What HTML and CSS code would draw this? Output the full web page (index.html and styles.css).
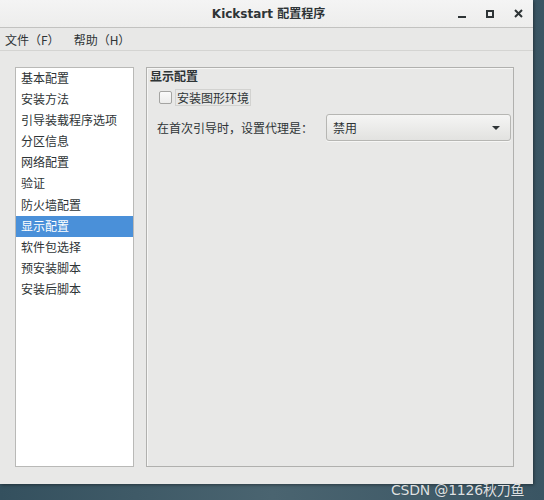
FILE: index.html
```html
<!DOCTYPE html>
<html lang="zh">
<head>
<meta charset="utf-8">
<link rel="stylesheet" href="styles.css">
</head>
<body>
<div class="desktop">
  <div class="window">
    <div class="titlebar">
      <div></div>
      <div class="title">Kickstart 配置程序</div>
      <div class="controls">
        <span class="ctl min"></span>
        <span class="ctl max"></span>
        <span class="ctl close">
          <svg width="9" height="9" viewBox="0 0 9 9"><path d="M1 1L8 8M8 1L1 8" stroke="#2e3436" stroke-width="2"/></svg>
        </span>
      </div>
    </div>
    <div class="menubar">
      <span class="menu">文件（F）</span>
      <span class="menu">帮助（H）</span>
    </div>
    <div class="content">
      <div class="list">
        <div class="item">基本配置</div>
        <div class="item">安装方法</div>
        <div class="item">引导装载程序选项</div>
        <div class="item">分区信息</div>
        <div class="item">网络配置</div>
        <div class="item">验证</div>
        <div class="item">防火墙配置</div>
        <div class="item selected">显示配置</div>
        <div class="item">软件包选择</div>
        <div class="item">预安装脚本</div>
        <div class="item">安装后脚本</div>
      </div>
      <div class="frame">
        <div class="legend">显示配置</div>
        <div class="check-row">
          <span class="checkbox"></span>
          <span class="check-label">安装图形环境</span>
        </div>
        <div class="combo-row">
          <span class="combo-label">在首次引导时，设置代理是：</span>
          <div class="combo">
            <span>禁用</span>
            <span class="arrow"></span>
          </div>
        </div>
      </div>
    </div>
  </div>
  <div class="watermark">CSDN @1126秋刀鱼</div>
</div>
</body>
</html>
```
FILE: styles.css
```css
* { box-sizing: border-box; }
html, body {
  margin: 0;
  padding: 0;
}
body {
  width: 544px;
  height: 500px;
  overflow: hidden;
  font-family: "Noto Sans CJK SC", "DejaVu Sans", sans-serif;
  font-size: 12px;
  color: #2e3436;
}
.desktop {
  position: relative;
  width: 544px;
  height: 500px;
  background: linear-gradient(90deg, #34505e 0%, #4a6470 50%, #3a5563 100%);
}
.window {
  width: 533px;
  height: 484px;
  background: #e8e8e7;
  display: flex;
  flex-direction: column;
  box-shadow: 1px 1px 3px rgba(0,0,0,0.4);
}
.titlebar {
  height: 28px;
  flex: none;
  display: grid;
  grid-template-columns: 1fr auto 1fr;
  align-items: center;
  background: linear-gradient(#f4f4f4, #ededec);
  border-bottom: 1px solid #c2c2c0;
}
.title {
  font-family: "DejaVu Sans", "Noto Sans CJK SC", sans-serif;
  font-weight: bold;
  font-size: 12px;
  color: #2e3436;
  padding-bottom: 2px;
  padding-left: 4px;
}
.controls {
  display: flex;
  justify-content: flex-end;
  align-items: center;
  padding-right: 1px;
}
.ctl {
  width: 28px;
  height: 16px;
  display: flex;
  align-items: center;
  justify-content: center;
}
.min::before {
  content: "";
  width: 8px;
  height: 2px;
  background: #2e3436;
  margin-top: 6px;
}
.max::before {
  content: "";
  width: 8px;
  height: 8px;
  border: 2px solid #2e3436;
  box-sizing: border-box;
}
.menubar {
  height: 23px;
  flex: none;
  display: flex;
  align-items: center;
  gap: 14px;
  padding-left: 5px;
  border-bottom: 1px solid #d4d4d2;
  background: #e8e8e7;
}
.menu {
  font-size: 12px;
  color: #2e3436;
}
.content {
  flex: 1;
  display: flex;
  padding: 16px 20px 17px 15px;
  gap: 12px;
}
.list {
  width: 119px;
  flex: none;
  background: #ffffff;
  border: 1px solid #b9b9b7;
  padding-top: 0;
  display: flex;
  flex-direction: column;
}
.item {
  height: 21.1px;
  line-height: 19px;
  padding-left: 5px;
  font-size: 12px;
  color: #2e3436;
}
.item.selected {
  background: #4a90d9;
  color: #ffffff;
  line-height: 20px;
}
.frame {
  flex: 1;
  border: 1px solid #b0b0ae;
  box-shadow: inset 1px 1px 0 #f6f6f5;
  padding: 0 2px 0 10px;
}
.legend {
  font-weight: bold;
  font-size: 12px;
  line-height: 15px;
  margin-left: -7px;
  color: #2e3436;
}
.check-row {
  display: flex;
  align-items: center;
  gap: 3px;
  margin-top: 6px;
  margin-left: 2px;
}
.checkbox {
  width: 13px;
  height: 13px;
  border: 1px solid #a4a4a2;
  border-radius: 2px;
  background: linear-gradient(#fafafa, #ececeb);
}
.check-label {
  border: 1px solid #d2d2d0;
  padding: 0 1px;
  line-height: 15px;
}
.combo-row {
  display: flex;
  align-items: center;
  margin-top: 8px;
}
.combo-label {
  width: 169px;
}
.combo {
  width: 185px;
  height: 27px;
  border: 1px solid #b6b6b3;
  border-radius: 3px;
  background: linear-gradient(#f5f5f4, #e2e2e0);
  display: flex;
  align-items: center;
  justify-content: space-between;
  padding: 0 10px 0 6px;
  box-shadow: 0 1px 0 rgba(255,255,255,0.6);
}
.arrow {
  width: 0;
  height: 0;
  border-left: 4px solid transparent;
  border-right: 4px solid transparent;
  border-top: 4px solid #2e3436;
}
.watermark {
  position: absolute;
  left: 391px;
  top: 479px;
  font-family: "DejaVu Sans", "Noto Sans CJK SC", sans-serif;
  font-size: 14px;
  color: rgba(255,255,255,0.85);
  text-shadow: 0 0 1px rgba(0,0,0,0.3);
  letter-spacing: -0.2px;
}
```
